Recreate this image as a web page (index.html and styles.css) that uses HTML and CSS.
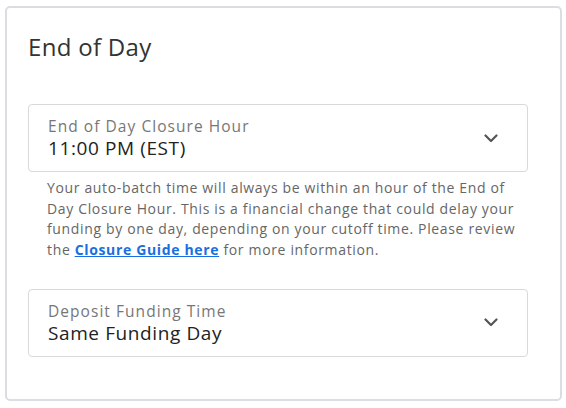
FILE: index.html
```html
<!DOCTYPE html>
<html>
<head>
<meta charset="utf-8">
<link rel="stylesheet" href="styles.css">
</head>
<body>
<section class="card">
  <h2 class="title">End of Day</h2>
  <div class="select">
    <div class="select-text">
      <div class="select-label">End of Day Closure Hour</div>
      <div class="select-value">11:00 PM (EST)</div>
    </div>
    <svg class="chev" width="14" height="9" viewBox="0 0 14 9"><path d="M1.5 1.5 L7 7 L12.5 1.5" fill="none" stroke="#555" stroke-width="2.2" stroke-linecap="round" stroke-linejoin="round"/></svg>
  </div>
  <p class="help">Your auto-batch time will always be within an hour of the End of<br>Day Closure Hour. This is a financial change that could delay your<br>funding by one day, depending on your cutoff time. Please review<br>the <a href="#" class="link">Closure Guide here</a> for more information.</p>
  <div class="select second">
    <div class="select-text">
      <div class="select-label">Deposit Funding Time</div>
      <div class="select-value">Same Funding Day</div>
    </div>
    <svg class="chev" width="14" height="9" viewBox="0 0 14 9"><path d="M1.5 1.5 L7 7 L12.5 1.5" fill="none" stroke="#555" stroke-width="2.2" stroke-linecap="round" stroke-linejoin="round"/></svg>
  </div>
</section>
</body>
</html>
```
FILE: styles.css
```css
html, body {
  margin: 0;
  padding: 0;
  background: #ffffff;
}
body {
  font-family: "Open Sans", "Noto Sans", sans-serif;
  color: #333;
}
.card {
  box-sizing: border-box;
  margin: 6px 0 0 5px;
  width: 557px;
  height: 395px;
  border: 2px solid #dcdde3;
  border-radius: 5px;
  padding: 23px 32px 0 21px;
}
.title {
  margin: 0 0 41px 0;
  font-size: 24px;
  line-height: 32px;
  font-weight: 400;
  letter-spacing: 0.3px;
  color: #333;
}
.select {
  box-sizing: border-box;
  height: 68px;
  border: 1px solid #d9d9d9;
  border-radius: 4px;
  display: flex;
  align-items: center;
  padding: 0 29px 0 19px;
}
.select-text {
  flex: 1;
  display: flex;
  flex-direction: column;
}
.select-label {
  font-size: 15.5px;
  line-height: 20px;
  letter-spacing: 1.05px;
  color: #777;
}
.select-value {
  font-size: 19px;
  line-height: 24px;
  letter-spacing: 0.6px;
  color: #222;
}
.chev {
  display: block;
}
.help {
  margin: 6px 0 0 0;
  padding-left: 19px;
  font-size: 14px;
  line-height: 20.7px;
  letter-spacing: 0.65px;
  color: #666;
}
.link {
  color: #1a6fe0;
  font-weight: 700;
  text-decoration: underline;
}
.second {
  margin-top: 28px;
}
```
